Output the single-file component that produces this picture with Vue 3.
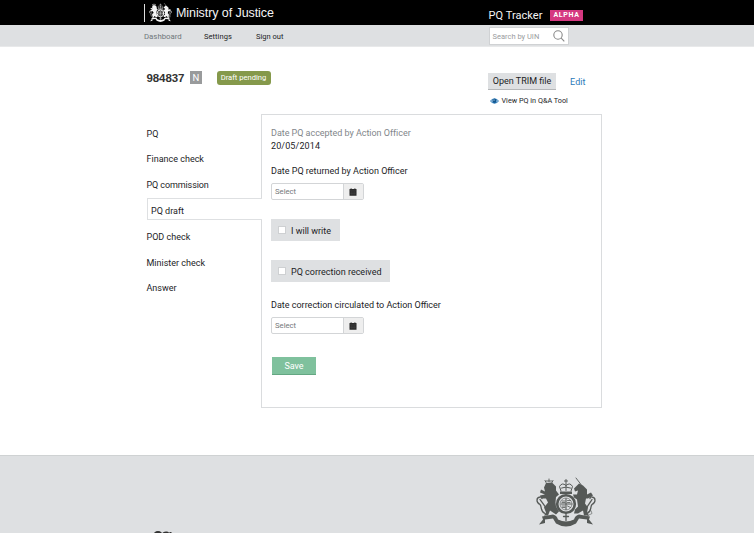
<script setup>
import { ref } from 'vue'

const steps = ['PQ', 'Finance check', 'PQ commission', 'PQ draft', 'POD check', 'Minister check', 'Answer']
const current = ref('PQ draft')
</script>

<template>
  <div class="page">
    <svg class="defs" aria-hidden="true">
      <symbol id="crest" viewBox="0 0 60 51">
        <g fill="none" stroke="currentColor" stroke-linecap="round" stroke-linejoin="round">
          <path d="M9 36C4 34 6 29 4 27C0 25 0 20 4 19.500Q6 19 6 21M4 22C6 25 10 29 11 33" stroke-width="1.3" />
          <path d="M51 36C56 34 54 29 56 27C60 25 60 20 56 19.500Q54 19 54 21M56 22C54 25 51 29 49 33" stroke-width="1.3" />
          <path d="M45 7L40 .5" stroke-width=".9" />
          <circle cx="30" cy="26.500" r="8.800" stroke-width="2.600" />
          <circle cx="30" cy="26.500" r="6" stroke-width=".6" />
          <path d="M30 21v11M25 26.500h10" stroke-width="1.100" />
          <path d="M26 23.500h3M26 25h3M31.500 23h3M31.500 25h2.500M26 28.500h3M26.500 30h2.500M31.500 28.500l3 1.500" stroke-width=".8" />
          <path d="M25 13.500l-1.500-4.500Q26 4.500 30 8Q34 4.500 36.500 9L35 13.500M30 2v11M28.500 3.500h3M25.500 10.500Q30 8.500 34.500 10.500" stroke-width="1" />
          <path d="M30 36v7M27.500 39h5" stroke-width="1.300" />
          <path d="M10 5l-1-2M13 4V1.500M16 5l1-2M10 3.500h6" stroke-width=".9" />
          <path d="M51 35l4-2 1 3-4 2z" stroke-width=".6" />
        </g>
        <g fill="currentColor">
          <path d="M10 5.500L16 5L20 9L20 13L23 17L20 19.500L19.500 25L20 29L23 34L20 37L17 35L14 33L12 38L8 38L10 35L8 30L12 25L10 21L5 21L4 18L9 17L4 15L5 12L9 14L8 10Z" />
          <path d="M40 9L43 6L47 8L51 12L51 17L55 15L57 18L52 21L50 21L49 26L52 30L51 35L53 38L48 38L47 33L42 36L38 36L39 32L42 29L41 22L38 20L37 17L41 17L42 13L39 14L38 11Z" />
          <path d="M24 14h12v2.500H24z" />
          <path d="M6 39L17 37Q21 38 22 42Q30 46 38 42Q39 38 43 37L54 39L53 42L57 47L51 45.500L51 42L43 41L40 46Q30 52 20 46L17 41L9 42L9 45.500L3 47L7 42Z" />
        </g>
      </symbol>
      <symbol id="calendar" viewBox="0 0 8 8">
        <path d="M.5 1h1V.5h1.300V1h2.400V.5h1.300V1h1v6.700H.5z" fill="#2b2b2b" />
        <path d="M.5 2.800h7M2.900 3v4.500M5.100 3v4.500M.5 5.200h7" stroke="#555" stroke-width=".35" />
      </symbol>
    </svg>

    <header class="top">
      <div class="wrap">
        <div class="org">
          <svg class="crest-small"><use href="#crest" /></svg>
          <span class="org-name">Ministry of Justice</span>
        </div>
        <div class="product">
          <span class="product-name">PQ Tracker</span>
          <span class="alpha">ALPHA</span>
        </div>
      </div>
    </header>

    <nav class="nav">
      <div class="wrap">
        <div class="links">
          <a class="muted dash">Dashboard</a>
          <a class="settings">Settings</a>
          <a>Sign out</a>
        </div>
        <div class="search">
          <span>Search by UIN</span>
          <svg viewBox="0 0 12 12"><circle cx="5" cy="5" r="4.2" /><path d="M8.2 8.2L11.3 11.3" /></svg>
        </div>
      </div>
    </nav>

    <main>
      <div class="title-row">
        <h1>984837</h1>
        <span class="type">N</span>
        <span class="status">Draft pending</span>
        <div class="actions">
          <div class="action-line">
            <button class="trim">Open TRIM file</button>
            <a class="edit">Edit</a>
          </div>
          <a class="view">
            <svg viewBox="0 0 9 6"><path d="M0 3Q4.5-2.5 9 3Q4.5 8.5 0 3" fill="#2876b5" /><circle cx="4.5" cy="2.8" r="2" fill="#10568f" /><path d="M1.2 3Q1.8 1.8 2.5 1.5Q2 3 2.7 4.5Q1.8 4 1.2 3M7.8 3Q7.2 1.8 6.5 1.5Q7 3 6.3 4.5Q7.2 4 7.8 3" fill="#cde2f1" /><circle cx="4" cy="2" r=".6" fill="#fff" /></svg>
            <span>View PQ in Q&amp;A Tool</span>
          </a>
        </div>
      </div>

      <div class="content">
        <ul class="steps">
          <li v-for="s in steps" :key="s" :class="{ active: s === current }" @click="current = s"><span>{{ s }}</span></li>
        </ul>
        <section class="panel">
          <p class="accepted">Date PQ accepted by Action Officer</p>
          <p class="date">20/05/2014</p>
          <p class="label returned">Date PQ returned by Action Officer</p>
          <div class="picker"><span>Select</span><i><svg><use href="#calendar" /></svg></i></div>
          <label class="check write"><b></b><span>I will write</span></label>
          <label class="check received"><b></b><span>PQ correction received</span></label>
          <p class="label circulated">Date correction circulated to Action Officer</p>
          <div class="picker"><span>Select</span><i><svg><use href="#calendar" /></svg></i></div>
          <button class="save">Save</button>
        </section>
      </div>
    </main>

    <footer>
      <svg class="ogl" viewBox="0 0 20 8"><path d="M1 5a4 4 0 0 1 8 0a4 4 0 0 0 8-1M9 5a4 4 0 0 1 7-2M17.5 1v7" /></svg>
      <svg class="crest-large"><use href="#crest" /></svg>
    </footer>
  </div>
</template>

<style>
body { background: #fff; overflow: hidden; }
</style>

<style scoped>
* { box-sizing: border-box; }
.page { height: 533px; overflow: hidden; display: flex; flex-direction: column; font: 9px/12px Roboto, "Liberation Sans", sans-serif; color: #1c1d1f; white-space: nowrap; }
.defs { position: absolute; width: 0; height: 0; }
p, h1, ul { margin: 0; padding: 0; }
button { font: inherit; border: 0; padding: 0; }
.top { height: 25px; background: #000; color: #f4f4f4; flex: none; }
.wrap { width: 458px; margin-left: 144px; display: flex; height: 100%; }
.org { width: 344.5px; display: flex; align-items: center; height: 18px; margin-top: 4px; border-left: 1px solid #ddd; padding-left: 4px; }
.crest-small { width: 23px; height: 20px; margin-right: 4px; }
.org-name { font: 12.5px/18px "Liberation Sans", sans-serif; letter-spacing: -.08px; }
.product { display: flex; align-items: center; padding-top: 5px; }
.product-name { font-size: 11px; width: 61.5px; letter-spacing: .05px; padding-top: 2px; }
.alpha { background: #d53880; color: #fff; font-weight: 700; font-size: 7px; line-height: 11px; height: 11px; width: 33px; text-align: center; letter-spacing: .7px; }
.nav { height: 22px; background: #dee0e2; border-bottom: 1px solid #e8e9ea; flex: none; }
.links { display: flex; width: 344.5px; padding-top: 6px; font-size: 7.5px; }
.muted { color: #6f777b; }
.dash { width: 60px; font-size: 7.8px; }
.settings { width: 52px; letter-spacing: .06px; }
.search { background: #fff; border: 1px solid #d0d2d4; width: 80.5px; height: 18px; margin-top: 2px; display: flex; align-items: center; justify-content: space-between; padding: 0 3px; color: #9a9c9e; font-size: 7.5px; }
.search span { padding-top: 1px; }
.search svg { width: 12px; height: 12px; fill: none; stroke: #888; stroke-width: 1.1; }
main { height: 408px; flex: none; padding-left: 146.5px; }
.title-row { height: 67px; display: flex; padding-top: 24px; }
h1 { font: 700 11.5px/14px "Liberation Sans", sans-serif; width: 43.5px; letter-spacing: -.1px; color: #333; }
.type { width: 12px; height: 13px; background: #999b9c; color: #fff; text-align: center; line-height: 14px; font-size: 9.5px; margin-right: 14.5px; }
.status { width: 54px; height: 14px; border-radius: 3px; background: #85994b; color: #fff; text-align: center; font-size: 7.6px; line-height: 14px; }
.actions { margin-left: 217.5px; padding-top: 2px; }
.action-line { display: flex; }
.trim { width: 68px; height: 17px; background: #dee0e2; border-bottom: 1px solid #b5b7b9; color: #1c1d1f; }
.edit { color: #2b7ab9; margin-left: 14px; line-height: 18px; letter-spacing: .1px; }
.view { display: flex; align-items: center; margin-top: 5px; margin-left: 2px; gap: 2.5px; font-size: 7.25px; line-height: 10px; }
.view svg { width: 9px; height: 6px; }
.content { display: flex; }
.steps { list-style: none; width: 115.5px; padding-top: 7.7px; position: relative; z-index: 1; }
.steps li { height: 25.2px; display: flex; align-items: center; }
.steps li:nth-child(3) span { letter-spacing: -.1px; }
.steps li.active { height: 22px; margin: .8px 0 3.8px; border: 1px solid #dee0e2; border-right: 0; background: #fff; padding: 3px 0 0 3.5px; }
.steps li:nth-child(n+5) { height: 25.8px; }
.panel { margin-left: -1px; width: 341px; height: 294px; border: 1px solid #dadcde; padding: 12px 0 0 9px; }
.accepted { color: #81868a; letter-spacing: -.03px; }
.date { line-height: 14px; letter-spacing: .12px; }
.returned { margin-top: 12px; }
.picker { width: 92.5px; height: 17px; display: flex; border: 1px solid #d3d5d7; border-radius: 2px; margin-top: 6px; }
.picker span { flex: 1; padding-left: 3px; font-size: 7.7px; line-height: 15px; color: #74777a; }
.picker i { width: 20px; background: #eee; border-left: 1px solid #d3d5d7; display: flex; align-items: center; justify-content: center; }
.picker svg { width: 8px; height: 8px; }
.check { display: flex; align-items: center; height: 22px; background: #dee0e2; padding-left: 7px; margin-top: 19px; width: 69px; }
.check b { width: 8px; height: 8px; background: #fff; border: 1px solid #ced0d2; margin-right: 5px; }
.check span { padding-top: 1px; }
.received { width: 119px; }
.circulated { margin-top: 17px; }
.save { display: block; width: 44px; height: 18px; margin: 23px 0 0 1px; background: #7fc19d; border-bottom: 1px solid #64a782; color: #fff; }
footer { flex: 1; background: #dee0e2; border-top: 1px solid #cfd2d3; display: flex; align-items: flex-start; color: #555957; }
.ogl { width: 20px; height: 8px; margin: 75px 0 0 153px; fill: none; stroke: #333; stroke-width: 2; }
.crest-large { width: 60px; height: 52px; margin: 21px 0 0 363px; }
</style>
